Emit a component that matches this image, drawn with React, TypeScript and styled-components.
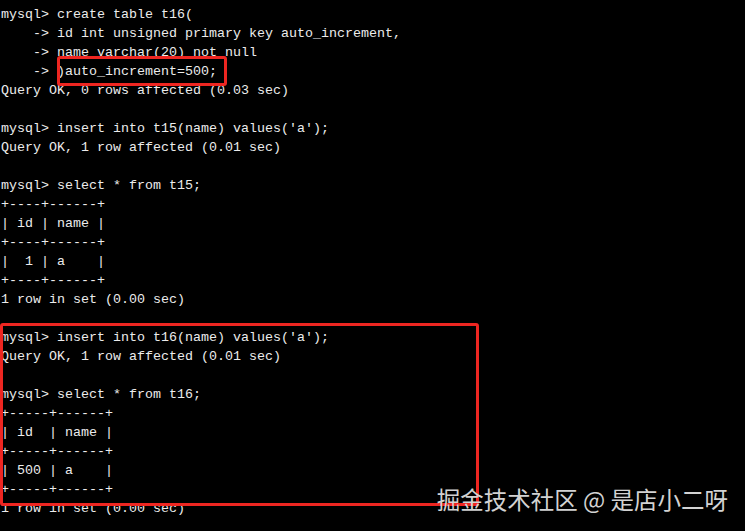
import React from "react";
import styled, { createGlobalStyle } from "styled-components";

const Global = createGlobalStyle`
  html, body { margin: 0; padding: 0; background: #000; }
  body { width: 745px; height: 531px; overflow: hidden; }
`;

const Screen = styled.div`
  position: relative;
  width: 745px;
  height: 531px;
  background: #000;
  overflow: hidden;
`;

const Console = styled.div`
  display: flex;
  flex-direction: column;
  padding: 5px 0 0 1px;
  font-family: "Liberation Mono", "DejaVu Sans Mono", monospace;
  font-size: 13.333px;
  line-height: 19px;
  color: #ececec;
`;

const Line = styled.div`
  white-space: pre;
  height: 19px;
`;

const Highlight = styled.div<{ $x: number; $y: number; $w: number; $h: number }>`
  position: absolute;
  left: ${(p) => p.$x}px;
  top: ${(p) => p.$y}px;
  width: ${(p) => p.$w}px;
  height: ${(p) => p.$h}px;
  box-sizing: border-box;
  border: 3.5px solid #ee2621;
  border-radius: 3px;
`;

const Watermark = styled.div`
  position: absolute;
  right: 17px;
  top: 483px;
  font-family: "Noto Sans CJK SC", "Noto Sans", sans-serif;
  font-size: 23.5px;
  line-height: 32px;
  color: #d2d2d2;
  white-space: nowrap;
`;

const lines = [
  "mysql> create table t16(",
  "    -> id int unsigned primary key auto_increment,",
  "    -> name varchar(20) not null",
  "    -> )auto_increment=500;",
  "Query OK, 0 rows affected (0.03 sec)",
  "",
  "mysql> insert into t15(name) values('a');",
  "Query OK, 1 row affected (0.01 sec)",
  "",
  "mysql> select * from t15;",
  "+----+------+",
  "| id | name |",
  "+----+------+",
  "|  1 | a    |",
  "+----+------+",
  "1 row in set (0.00 sec)",
  "",
  "mysql> insert into t16(name) values('a');",
  "Query OK, 1 row affected (0.01 sec)",
  "",
  "mysql> select * from t16;",
  "+-----+------+",
  "| id  | name |",
  "+-----+------+",
  "| 500 | a    |",
  "+-----+------+",
  "1 row in set (0.00 sec)",
];

export default function App() {
  return (
    <Screen>
      <Global />
      <Console>
        {lines.map((l, i) => (
          <Line key={i}>{l}</Line>
        ))}
      </Console>
      <Highlight $x={57} $y={56} $w={170} $h={30} />
      <Highlight $x={0} $y={323} $w={479} $h={183} />
      <Watermark>掘金技术社区 @ 是店小二呀</Watermark>
    </Screen>
  );
}
